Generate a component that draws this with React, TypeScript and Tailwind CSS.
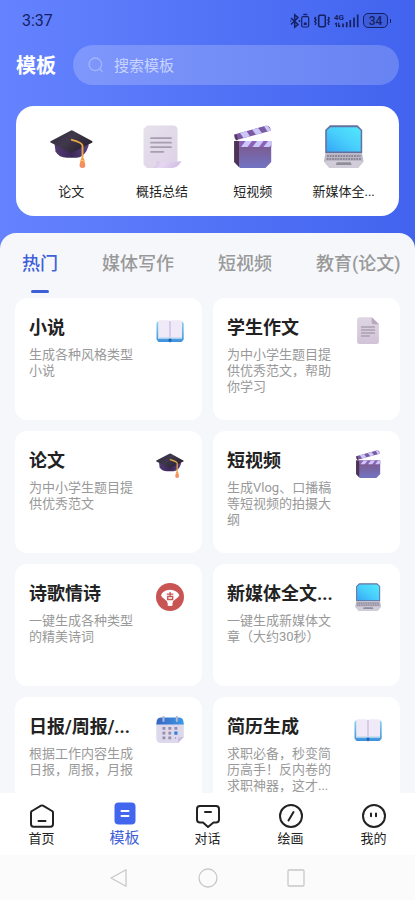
import type { ReactNode } from "react";

function SharedGradients() {
  return (
    <svg aria-hidden="true" className="absolute h-0 w-0">
      <defs>
        <linearGradient id="capTop" x1="0" y1="0" x2="1" y2="0.6">
          <stop offset="0" stopColor="#2f2937" />
          <stop offset="0.5" stopColor="#40384c" />
          <stop offset="1" stopColor="#2a2331" />
        </linearGradient>
        <linearGradient id="capBase" x1="0" y1="0" x2="1" y2="0">
          <stop offset="0" stopColor="#513a73" />
          <stop offset="0.5" stopColor="#3c2858" />
          <stop offset="1" stopColor="#5a4080" />
        </linearGradient>
        <linearGradient id="tassel" x1="0" y1="0" x2="0" y2="1">
          <stop offset="0" stopColor="#f39a4e" />
          <stop offset="1" stopColor="#f58a68" />
        </linearGradient>
        <linearGradient id="paper" x1="0" y1="0" x2="1" y2="1">
          <stop offset="0" stopColor="#e6e0ec" />
          <stop offset="1" stopColor="#ddd2e6" />
        </linearGradient>
        <linearGradient id="roll" x1="0" y1="0" x2="1" y2="0.2">
          <stop offset="0" stopColor="#c9b4dc" />
          <stop offset="0.4" stopColor="#e6d8f2" />
          <stop offset="1" stopColor="#d3bfe6" />
        </linearGradient>
        <linearGradient id="note" x1="0" y1="0" x2="0" y2="1">
          <stop offset="0" stopColor="#ded6e2" />
          <stop offset="1" stopColor="#d2c3d8" />
        </linearGradient>
        <linearGradient id="slate" x1="0" y1="0" x2="0" y2="1">
          <stop offset="0" stopColor="#7d5684" />
          <stop offset="1" stopColor="#7274c4" />
        </linearGradient>
        <linearGradient id="screen" x1="1" y1="0" x2="0" y2="1">
          <stop offset="0" stopColor="#52e8fd" />
          <stop offset="0.5" stopColor="#48cffb" />
          <stop offset="1" stopColor="#35a6f7" />
        </linearGradient>
        <linearGradient id="cover" x1="0" y1="0" x2="0" y2="1">
          <stop offset="0" stopColor="#8bd3ee" />
          <stop offset="1" stopColor="#3d8fdc" />
        </linearGradient>
        <linearGradient id="calHead" x1="0" y1="0" x2="1" y2="0">
          <stop offset="0" stopColor="#3765c4" />
          <stop offset="1" stopColor="#3c9ae6" />
        </linearGradient>
      </defs>
    </svg>
  );
}

type IconProps = { className: string };

function CapIcon({ className }: IconProps) {
  return (
    <svg aria-hidden="true" viewBox="0 0 43 43" className={className}>
      <path d="M4.500 18.500 5.500 26.500Q9 32.700 17 32.700H27Q35.500 31.500 38.500 21V17Z" fill="url(#capBase)" />
      <path d="M.6 16.200 20.500 5.700Q21.700 5 23 5.700L42 16Q43 17 42 17.800L22.500 27.300Q21.200 28 20 27.300L.6 17.500Q-.2 16.800.6 16.200Z" fill="url(#capTop)" />
      <path d="M21.800 14.800Q32.500 17.800 32.500 20.500V35" fill="none" stroke="#e8a846" strokeWidth="1.900" strokeLinecap="round" />
      <path d="M31 33.500H34L35.300 40Q35.500 43 32.500 43T29.500 40Z" fill="url(#tassel)" />
      <path d="M30.700 35.500H34.500" stroke="#fac070" strokeWidth="1" />
    </svg>
  );
}

function ScrollIcon({ className }: IconProps) {
  return (
    <svg aria-hidden="true" viewBox="0 0 43 43" className={className}>
      <path d="M6 .5H32Q36.500.5 36.500 5V38H15V43H6L2.500 39.500V4Z" fill="url(#paper)" />
      <path d="M11.500 43Q15.500 42 15.500 36.500 27 38.500 40.500 36 37 43 31 43Z" fill="url(#roll)" />
      <path d="M10 13.200H30M10 17.700H30M10 22.200H30M10 26.800H22.300" stroke="#a79fb0" strokeWidth="1.800" strokeLinecap="round" />
    </svg>
  );
}

function ClapperIcon({ className }: IconProps) {
  return (
    <svg aria-hidden="true" viewBox="0 0 43 43" className={className}>
      <path d="M3.200 9.500 34.500.8Q39.800.3 39.600 5.800L5.500 15Q3.200 14 3.200 9.500Z" fill="#7c5aa3" />
      <path d="M9 7.900 15.500 6.100 19 11.300 12.500 13.100ZM21 4.600 27 2.900 31 8.100 25 9.700ZM33 1.300 36.500.7 39.600 4.500V5.800L36.500 6.600Z" fill="#cbc7fb" />
      <path d="M3.200 16H40.200V37L34.500 43H9L3.200 37Z" fill="url(#slate)" />
      <path d="M3.200 16H8V42L3.200 37Z" fill="#4d3454" />
      <path d="M8 16H40.200V22H8Z" fill="#8d62b6" />
      <path d="M14.500 16H21L16.500 22H10ZM26 16H32.500L28 22H21.500ZM37 16H40.200V20L38.500 22H32.500Z" fill="#cbc7fb" />
      <path d="M3.400 10 5 15.500 7 14.600 5.500 9.200Z" fill="#54395f" />
    </svg>
  );
}

function LaptopIcon({ className }: IconProps) {
  return (
    <svg aria-hidden="true" viewBox="0 0 43 43" className={className}>
      <path d="M8 .3H35.500L40.200 5V28H3.200V5Z" fill="#64719f" />
      <path d="M8.500 2.200H35L38.700 5.500V26.500H4.800V5.500Z" fill="url(#screen)" />
      <path d="M3.500 28H40L41.500 36.500 36 43H7.500L1.800 36.500Z" fill="#bcb8c6" />
      <path d="M2 36H41.300L36 43H7.500Z" fill="#d0ccd8" />
      <path d="M5 31H38.500M4.600 34H39" stroke="#8a8797" strokeWidth="1.800" strokeDasharray="1.900 .8" />
      <path d="M14.800 37.300H28.700L29.700 40H13.800Z" fill="#918e9c" />
    </svg>
  );
}

function BookIcon({ className }: IconProps) {
  return (
    <svg aria-hidden="true" viewBox="0 0 28 28" className={className}>
      <path d="M1.800 4.500H26.200L27.700 6V22.500L25.500 25H15L14 25.600 13 25H2.500L.5 22.500V6Z" fill="url(#cover)" />
      <path d="M2 20H26V21.800H2Z" fill="#bfdcf4" />
      <path d="M3.500 3.300H12.500L14 4.200 15.500 3.300H24.500Q26 3.300 26 5V20.200H14.700L14 21 13.300 20.200H2.200V5Q2.200 3.300 3.500 3.300Z" fill="#f0e9f7" />
      <path d="M13 4H15V20.500H13Z" fill="#d8cae8" />
      <path d="M12.700 21.700H15.300V24.500H12.700Z" fill="#1d5fae" />
    </svg>
  );
}

function NoteIcon({ className }: IconProps) {
  return (
    <svg aria-hidden="true" viewBox="0 0 28 28" className={className}>
      <path d="M5.500.2H18L24.900 7V24.500Q24.900 27 22.400 27H5.500Q3.100 27 3.100 24.500V2.700Q3.100.2 5.500.2Z" fill="url(#note)" />
      <path d="M17.700.2 24.900 7.200H19.500Q17.700 7.200 17.700 5.500Z" fill="#b8a9be" />
      <path d="M7.500 10H20.500M7.500 13H20.500M7.500 16H20.500M7.500 19H15.500" stroke="#aaa0b0" strokeWidth="1.300" strokeLinecap="round" />
    </svg>
  );
}

function FanIcon({ className }: IconProps) {
  return (
    <svg aria-hidden="true" viewBox="0 0 28 28" className={className}>
      <circle cx="14" cy="14" r="14" fill="#c85554" />
      <path d="M5 12.500Q6.500 7.200 14 6.800 21.500 7.200 23.300 12.500L22 14.300 17 18.200V19.500H16.500V22.500Q14 23.500 11.700 22.500V19.500H11V18.200L6.200 14.300Z" fill="white" />
      <path d="M10.800 11.200H17.400M14.100 9V13.200M11.700 13.500H16.700V16.500H11.700Z" fill="none" stroke="#c85554" strokeWidth="1.300" />
    </svg>
  );
}

function CalendarIcon({ className }: IconProps) {
  return (
    <svg aria-hidden="true" viewBox="0 0 28 28" className={className}>
      <path d="M.3 7H27.800V21L22 27H5Q.3 27 .3 22Z" fill="#ddd8ec" />
      <path d="M22 27V23.500Q22 21 24.500 21H27.800Z" fill="#c8bfdf" />
      <path d="M4.500 1.500H23.500Q27.800 1.500 27.800 8.500H.3Q.3 1.500 4.500 1.500Z" fill="url(#calHead)" />
      <path d="M7.500.8V5M20.800.8V5" stroke="#b8b6cf" strokeWidth="2" strokeLinecap="round" />
      <path d="M6.500 11H9.300V13.700H6.500ZM12.400 11H15.200V13.700H12.400ZM18.500 11H21.300V13.700H18.500ZM6.500 15.800H9.300V18.500H6.500ZM12.400 15.800H15.200V18.500H12.400ZM6.500 20.600H9.300V23.300H6.500ZM12.400 20.600H15.200V23.300H12.400Z" fill="#948cab" />
      <path d="M18.300 15.500H21.500V18.700H18.300Z" fill="#2f7fdc" />
      <circle cx="19.500" cy="22" r=".7" fill="#948cab" />
    </svg>
  );
}

function StatusBar() {
  return (
    <div className="flex h-10 items-center justify-between pt-px pr-6 pl-[22px] text-[#142263]">
      <span className="text-[16px] leading-5">3:37</span>
      <div className="flex items-center">
        <svg aria-hidden="true" viewBox="0 0 42 16" className="mr-0.5 h-4 w-[42px]" fill="none" stroke="currentColor">
          <path d="M1 5 8 11.500 4.700 14.200V1.800L8 4.500 1 11.500" strokeWidth="1.500" />
          <path d="M9.500 7V9M.5 7.500V8.500" strokeWidth="1.300" />
          <rect x="11.700" y="3.700" width="7" height="10.300" rx="1.500" strokeWidth="1.200" />
          <path d="M13.300 1.500H17.200" strokeWidth="1.400" />
          <path d="M13.800 9.500H16.700V12H13.800Z" fill="currentColor" stroke="none" />
          <rect x="28.700" y="2.300" width="6.600" height="11.500" rx="1.200" strokeWidth="1.600" />
          <path d="M25.800 4 24.800 5.500 26 7 24.800 8.500 26 10 25 12M38.200 4 39.200 5.500 38 7 39.200 8.500 38 10 39 12" strokeWidth="1.400" />
        </svg>
        <div className="relative mr-1 h-4 w-[25px]">
          <span className="absolute top-0 left-0 text-[8px] leading-[9px] font-bold">4G</span>
          <svg aria-hidden="true" viewBox="0 0 25 16" className="h-4 w-[25px]" fill="none" stroke="currentColor">
            <path d="M2.500 9.800V14M1 11.300 2.500 9.700M4.700 9.800V14M4.700 14.200 6.200 12.500" strokeWidth="1.200" />
            <path d="M9 14.300V10.500M12.700 14.300V9M16.300 14.300V7M20 14.300V4.500M23.700 14.300V1.500" strokeWidth="1.700" />
          </svg>
        </div>
        <span className="flex h-[15px] w-[25px] items-center justify-center rounded-[5px] border border-current bg-[#3f5cdb] text-[12px] leading-3 font-medium">
          34
        </span>
        <span className="ml-0.5 h-1 w-px bg-current" />
      </div>
    </div>
  );
}

const shortcuts = [
  { label: "论文", Icon: CapIcon },
  { label: "概括总结", Icon: ScrollIcon },
  { label: "短视频", Icon: ClapperIcon },
  { label: "新媒体全...", Icon: LaptopIcon },
];

const tabs = ["热门", "媒体写作", "短视频", "教育(论文)"];

const templates = [
  { title: "小说", text: "生成各种风格类型小说", Icon: BookIcon },
  { title: "学生作文", text: "为中小学生题目提供优秀范文，帮助你学习", Icon: NoteIcon },
  { title: "论文", text: "为中小学生题目提供优秀范文", Icon: CapIcon },
  { title: "短视频", text: "生成Vlog、口播稿等短视频的拍摄大纲", Icon: ClapperIcon },
  { title: "诗歌情诗", text: "一键生成各种类型的精美诗词", Icon: FanIcon },
  { title: "新媒体全文...", text: "一键生成新媒体文章（大约30秒）", Icon: LaptopIcon },
  { title: "日报/周报/...", text: "根据工作内容生成日报，周报，月报", Icon: CalendarIcon },
  { title: "简历生成", text: "求职必备，秒变简历高手！反内卷的求职神器，这才...", Icon: BookIcon },
];

function NavItem({ label, active, children }: { label: string; active?: boolean; children: ReactNode }) {
  return (
    <button
      type="button"
      aria-current={active ? "page" : undefined}
      className={
        active
          ? "flex flex-1 flex-col items-center gap-px pt-2 text-[15px] text-[#4060d8]"
          : "flex flex-1 flex-col items-center pt-2.5 text-[13px] text-[#222]"
      }
    >
      <svg aria-hidden="true" viewBox="0 0 26 26" className="h-[26px] w-[26px]" fill="none" stroke="currentColor" strokeWidth="2" strokeLinecap="round" strokeLinejoin="round">
        {children}
      </svg>
      <span className="leading-5">{label}</span>
    </button>
  );
}

export default function App() {
  return (
    <div className="flex h-screen flex-col overflow-hidden bg-linear-to-r from-[#6583ff] to-[#4163ee] font-[Roboto,'Noto_Sans_CJK_SC',sans-serif]">
      <SharedGradients />
      <header className="shrink-0">
        <StatusBar />
        <div className="flex items-center gap-[17px] px-4 pt-[5px]">
          <h1 className="shrink-0 pt-0.5 text-[20px] leading-[38px] font-bold text-white">模板</h1>
          <label className="flex h-10 min-w-0 flex-1 items-center gap-2.5 rounded-full bg-white/20 px-[15px]">
            <svg aria-hidden="true" viewBox="0 0 16 16" className="h-4 w-4 shrink-0" fill="none" stroke="#a3b4ff" strokeWidth="1.300" strokeLinecap="round">
              <circle cx="7.300" cy="7.300" r="6.300" />
              <path d="M12 12 14.300 14.600" />
            </svg>
            <input
              type="search"
              aria-label="搜索模板"
              placeholder="搜索模板"
              className="min-w-0 flex-1 bg-transparent pt-0.5 text-[15px] text-white outline-none placeholder:text-[#c9d3ff]"
            />
          </label>
        </div>
        <section className="mx-4 mt-[21px] flex rounded-[18px] bg-white px-2.5 pt-[19px] pb-3.5">
          {shortcuts.map(({ label, Icon }) => (
            <button key={label} type="button" className="flex min-w-0 flex-1 flex-col items-center">
              <Icon className="h-[43px] w-[43px]" />
              <span className="mt-3.5 text-[13px] leading-5 whitespace-nowrap text-[#222]">{label}</span>
            </button>
          ))}
        </section>
      </header>

      <main className="mt-[17px] flex min-h-0 flex-1 flex-col rounded-t-2xl bg-[#f5f7fb]">
        <div role="tablist" className="flex shrink-0 gap-11 overflow-hidden pt-[19px] pl-[22px]">
          {tabs.map((tab, i) => (
            <button
              key={tab}
              type="button"
              role="tab"
              aria-selected={i === 0}
              className={
                i === 0
                  ? "flex shrink-0 flex-col items-center text-[18px] leading-6 font-medium text-[#4060d8]"
                  : "flex shrink-0 flex-col items-center text-[18px] leading-6 font-medium text-[#999]"
              }
            >
              {tab}
              {i === 0 && <span className="mt-3.5 h-[3px] w-[18px] rounded-full bg-[#4060d8]" />}
            </button>
          ))}
        </div>
        <div className="mt-[5px] grid min-h-0 flex-1 auto-rows-max grid-cols-2 gap-[11px] overflow-y-auto px-[15px] pb-4 [scrollbar-width:none]">
          {templates.map(({ title, text, Icon }) => (
            <a
              key={title}
              href="#"
              className="flex min-h-[122px] justify-between gap-2 rounded-xl bg-white pt-4 pr-[18px] pb-4 pl-3.5"
            >
              <div className="min-w-0 max-w-[110px]">
                <h2 className="text-[18px] leading-7 font-bold whitespace-nowrap text-[#222]">{title}</h2>
                <p className="mt-[5px] text-[13px] leading-4 text-[#999]">{text}</p>
              </div>
              <Icon className="mt-[3px] h-7 w-7 shrink-0" />
            </a>
          ))}
        </div>
      </main>

      <nav className="flex h-[62px] shrink-0 bg-white">
        <NavItem label="首页">
          <path d="M2 9.500Q2 8.500 3 8L12 2.700Q13 2.200 14 2.700L23 8Q24 8.500 24 9.500V21Q24 23.700 21.500 23.700H4.500Q2 23.700 2 21ZM9.500 18H16.500" />
        </NavItem>
        <NavItem label="模板" active>
          <rect x="2.500" y="1.500" width="21" height="22" rx="4" fill="#4366ee" stroke="none" />
          <path d="M9.500 10H16.500M9.500 15H16.500" stroke="white" />
        </NavItem>
        <NavItem label="对话">
          <path d="M5 3H21Q24 3 24 6V16.500Q24 19.500 21 19.500H18.500L13 24 8 19.500H5Q2 19.500 2 16.500V6Q2 3 5 3ZM10 9H16" />
        </NavItem>
        <NavItem label="绘画">
          <circle cx="13" cy="13" r="11" />
          <path d="M15.500 9 10.500 17.500" />
        </NavItem>
        <NavItem label="我的">
          <circle cx="13" cy="13" r="11" />
          <path d="M10 10.500V13.200M15 10.500V13.200" />
        </NavItem>
      </nav>

      <div className="flex h-[45px] shrink-0 items-center justify-center gap-[68px] bg-[#fbfbfb]">
        <button type="button" aria-label="返回">
          <svg aria-hidden="true" viewBox="0 0 20 20" className="h-5 w-5" fill="none" stroke="#c8c8c8" strokeWidth="1.300" strokeLinejoin="round">
            <path d="M1 10 16 1.700V18.300Z" />
          </svg>
        </button>
        <button type="button" aria-label="主屏幕">
          <svg aria-hidden="true" viewBox="0 0 20 20" className="h-5 w-5" fill="none" stroke="#c8c8c8" strokeWidth="1.300">
            <circle cx="10" cy="10" r="9" />
          </svg>
        </button>
        <button type="button" aria-label="最近任务">
          <svg aria-hidden="true" viewBox="0 0 20 20" className="h-5 w-5" fill="none" stroke="#c8c8c8" strokeWidth="1.300">
            <rect x="2" y="2" width="16" height="16" rx="1" />
          </svg>
        </button>
      </div>
    </div>
  );
}
